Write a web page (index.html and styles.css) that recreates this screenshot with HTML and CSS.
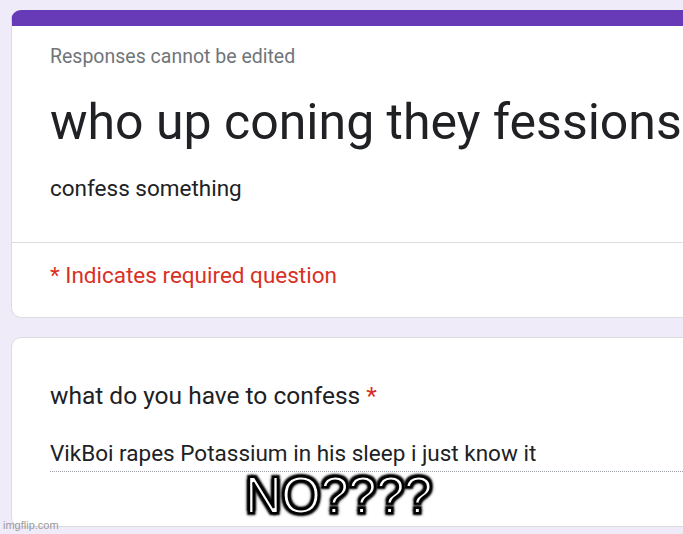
FILE: index.html
```html
<!DOCTYPE html>
<html lang="en">
<head>
    <meta charset="UTF-8">
    <title>who up coning they fessions</title>
    <link rel="stylesheet" href="styles.css">
</head>
<body>
    <div class="page">
        <div class="card head-card">
            <div class="head-body">
                <p class="note">Responses cannot be edited</p>
                <h1 class="title">who up coning they fessions</h1>
                <p class="desc">confess something</p>
            </div>
            <div class="head-foot">
                <p class="required">* Indicates required question</p>
            </div>
        </div>
        <div class="card question">
            <p class="q-label">what do you have to confess <span class="star">*</span></p>
            <div class="answer">VikBoi rapes Potassium in his sleep i just know it</div>
            <div class="caption">NO????</div>
        </div>
    </div>
    <div class="watermark">imgflip.com</div>
</body>
</html>
```

FILE: styles.css
```css
* {
    margin: 0;
    padding: 0;
    box-sizing: border-box;
}
html, body {
    width: 683px;
    height: 534px;
    overflow: hidden;
}
body {
    background: #f0ebf8;
    font-family: Roboto, "Noto Sans", sans-serif;
    color: #202124;
    position: relative;
}
.page {
    padding: 10px 0 0 11px;
    width: 760px;
}
.card {
    background: #fff;
    border: 1px solid #dadce0;
    border-radius: 10px;
}
.head-card {
    border-top: 16px solid #673ab7;
    height: 308px;
}
.head-body {
    padding: 19px 38px 0;
    height: 217px;
    border-bottom: 1px solid #dadce0;
}
.note {
    font-size: 19.5px;
    color: #70757a;
}
.title {
    font-size: 50px;
    font-weight: 400;
    margin-top: 25px;
    white-space: nowrap;
}
.desc {
    font-size: 22.5px;
    margin-top: 24px;
}
.head-foot {
    padding: 19px 38px 0;
}
.required {
    font-size: 22.5px;
    color: #d93025;
}
.question {
    margin-top: 19px;
    height: 190px;
    padding: 43px 38px 0;
    position: relative;
}
.q-label {
    font-size: 24.5px;
}
.star {
    color: #d93025;
}
.answer {
    margin-top: 30px;
    font-size: 22.5px;
    padding-bottom: 5px;
    border-bottom: 1px dotted #9aa0a6;
    white-space: nowrap;
}
.caption {
    position: absolute;
    left: 233px;
    top: 128px;
    font-family: "Liberation Sans", Arial, sans-serif;
    font-size: 51px;
    color: #fff;
    -webkit-text-stroke: 2px #000;
    text-shadow: 2px 2px 2px #000, -2px -2px 2px #000, 2px -2px 2px #000, -2px 2px 2px #000, 0 0 5px #000;
    letter-spacing: -0.5px;
}
.watermark {
    position: absolute;
    left: 3px;
    bottom: 3px;
    font-family: "Liberation Sans", Arial, sans-serif;
    font-size: 11px;
    color: #9a9a9a;
}
```
